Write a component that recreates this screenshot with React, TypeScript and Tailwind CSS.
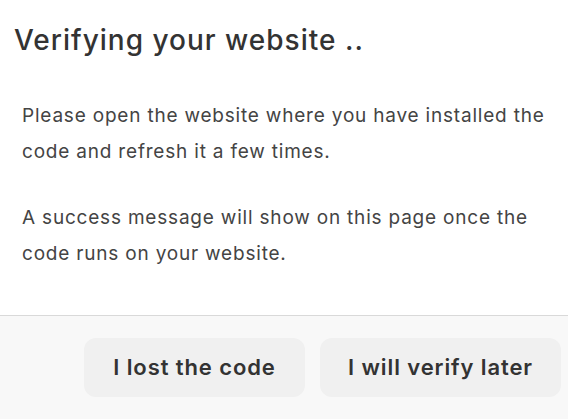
import React from "react";

export default function App() {
  return (
    <div className="w-[568px] h-[419px] bg-white flex flex-col overflow-hidden font-['Inter',sans-serif]">
      {/* Header */}
      <div className="px-[14px] pt-[23px] h-[98px]">
        <h1 className="text-[28px] leading-[34px] font-medium text-[#333333] tracking-[1px]">
          Verifying your website ..
        </h1>
      </div>

      {/* Body */}
      <div className="px-[22px] flex-1 text-[19px] leading-[36px] text-[#444444] tracking-[0.8px]">
        <p>
          Please open the website where you have installed the code and refresh it a few times.
        </p>
        <p className="mt-[30px]">
          A success message will show on this page once the code runs on your website.
        </p>
      </div>

      {/* Footer */}
      <div className="h-[104px] border-t border-[#d9d9d9] bg-[#f8f8f8] flex justify-end items-start gap-[15px] pt-[22px] pr-[7px]">
        <button className="h-[59px] w-[221px] rounded-[12px] bg-[#f0f0f0] text-[22px] font-semibold text-[#333333] tracking-[0.9px]">
          I lost the code
        </button>
        <button className="h-[59px] w-[241px] rounded-[12px] bg-[#f0f0f0] text-[22px] font-semibold text-[#333333] tracking-[0.9px]">
          I will verify later
        </button>
      </div>
    </div>
  );
}
